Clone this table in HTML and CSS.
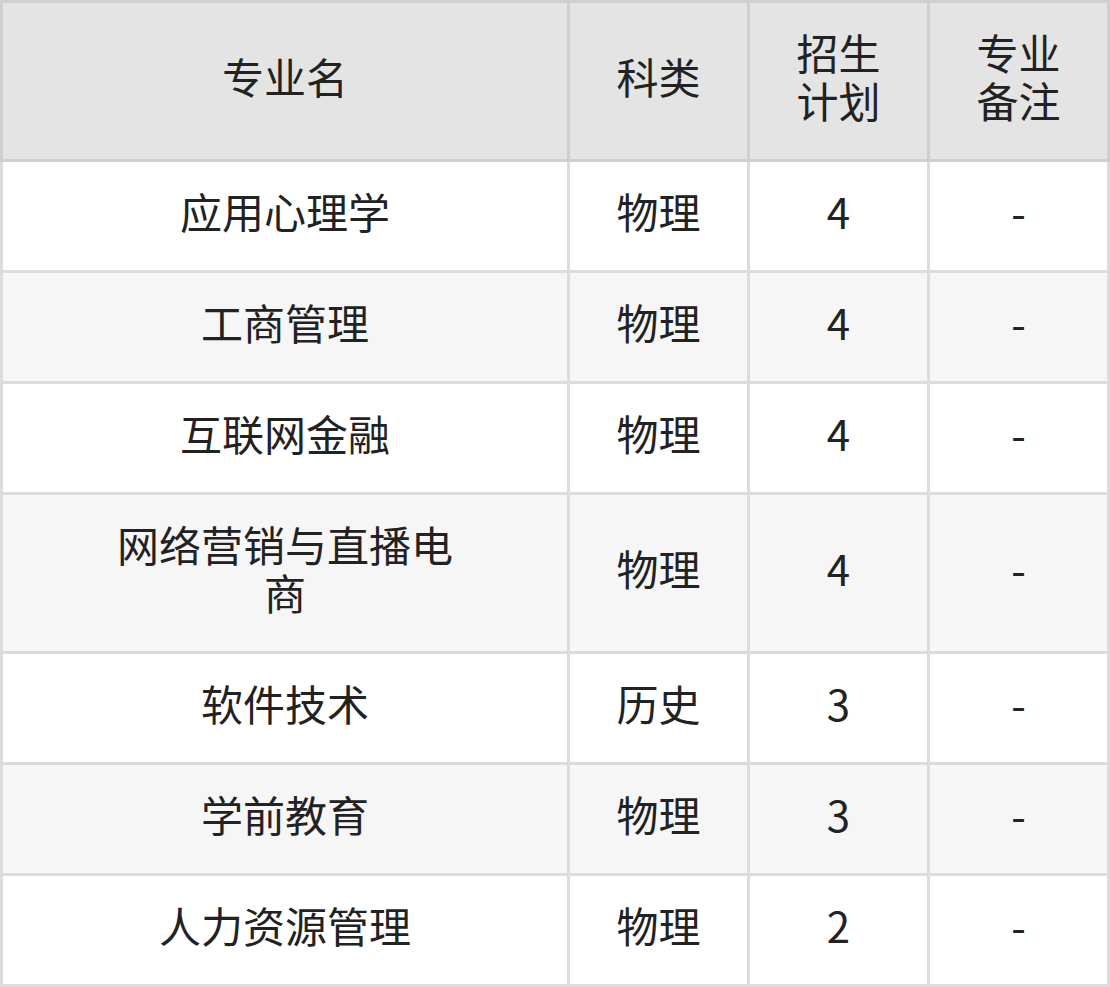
FILE: index.html
```html
<!DOCTYPE html>
<html lang="zh">
<head>
<meta charset="utf-8">
<link rel="stylesheet" href="styles.css">
</head>
<body>
<table class="plan">
  <thead>
    <tr>
      <th class="c-name">专业名</th>
      <th class="c-sm">科类</th>
      <th class="c-sm">招生计划</th>
      <th class="c-sm">专业备注</th>
    </tr>
  </thead>
  <tbody>
    <tr><td class="c-name">应用心理学</td><td>物理</td><td>4</td><td>-</td></tr>
    <tr><td class="c-name">工商管理</td><td>物理</td><td>4</td><td>-</td></tr>
    <tr><td class="c-name">互联网金融</td><td>物理</td><td>4</td><td>-</td></tr>
    <tr><td class="c-name">网络营销与直播电商</td><td>物理</td><td>4</td><td>-</td></tr>
    <tr><td class="c-name">软件技术</td><td>历史</td><td>3</td><td>-</td></tr>
    <tr><td class="c-name">学前教育</td><td>物理</td><td>3</td><td>-</td></tr>
    <tr><td class="c-name">人力资源管理</td><td>物理</td><td>2</td><td>-</td></tr>
  </tbody>
</table>
</body>
</html>
```
FILE: styles.css
```css
html, body {
  margin: 0;
  padding: 0;
  background: #ffffff;
}

.plan {
  width: 1110px;
  border-collapse: separate;
  border-spacing: 0;
  table-layout: fixed;
  font-family: "Noto Sans CJK SC", "Noto Sans", sans-serif;
  font-size: 42px;
  line-height: 48px;
  color: #222222;
}

.plan th,
.plan td {
  box-sizing: border-box;
  width: 180px;
  padding: 25px 30px 35px;
  text-align: center;
  vertical-align: middle;
  font-weight: normal;
  border-right: 3px solid #dcdcdc;
  border-bottom: 3px solid #dcdcdc;
}

.plan th.c-name,
.plan td.c-name {
  width: 570px;
  padding-left: 108px;
  padding-right: 108px;
  border-left: 3px solid #dcdcdc;
}

.plan th {
  background: #e4e4e4;
  border-color: #cfcfcf;
  border-top: 3px solid #cfcfcf;
}

.plan th.c-name {
  border-left-color: #cfcfcf;
}

.plan tbody tr:nth-child(even) td {
  background: #f6f6f6;
}
```
